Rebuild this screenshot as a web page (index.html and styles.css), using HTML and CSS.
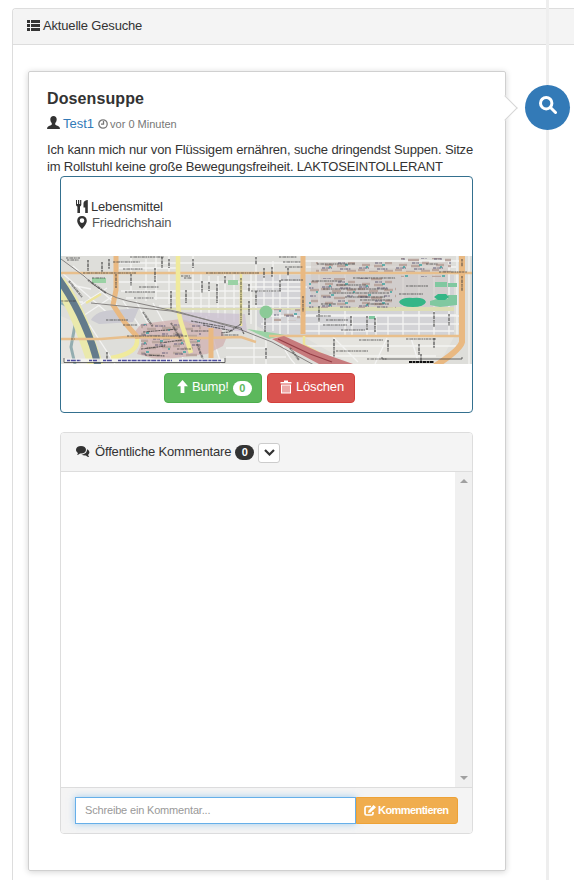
FILE: index.html
```html
<!DOCTYPE html>
<html lang="de">
<head>
<meta charset="utf-8">
<title>Aktuelle Gesuche</title>
<link rel="stylesheet" href="styles.css">
</head>
<body>
<main class="panel">
  <header class="panel-head">
    <svg class="ic-list" viewBox="0 0 13 11"><path d="M0 0h3v3H0zM4 0h9v3H4zM0 4h3v3H0zM4 4h9v3H4zM0 8h3v3H0zM4 8h9v3H4z"/></svg>
    <span class="t-head">Aktuelle Gesuche</span>
  </header>
  <div class="timeline">
    <article class="card">
      <h1><span>Dosensuppe</span></h1>
      <div class="meta">
        <svg class="ic-user" viewBox="0 0 13 13"><path d="M6.500 0c2 0 3.200 1.300 3.200 3.300 0 1.500-.6 3-1.500 3.900v1.200c.6.900 4 1.500 4.500 3 .2.500.2 1 .2 1.600H.1c0-.6 0-1.100.2-1.600.5-1.500 3.900-2.100 4.500-3V7.200c-.9-.9-1.500-2.400-1.500-3.900C3.300 1.300 4.500 0 6.500 0z"/></svg>
        <a class="user">Test1</a>
        <svg class="ic-time" viewBox="0 0 10 10"><circle cx="5" cy="5" r="4.200"/><path d="M5.500 2v3.200H3"/></svg>
        <small>vor 0 Minuten</small>
      </div>
      <p class="body"><span class="l1">Ich kann mich nur von Flüssigem ernähren, suche dringendst Suppen. Sitze</span><span class="l2">im Rollstuhl keine große Bewegungsfreiheit. LAKTOSEINTOLLERANT</span></p>
      <section class="info">
        <div class="tags">
          <div class="row"><svg class="ic-food" viewBox="0 0 13 13"><path d="M0 0h1v4h1V0h1.200v4h.9V0h1.200v4.500c0 1-.6 1.600-1.300 2V13H1.400V6.500C.6 6.100 0 5.500 0 4.500zM11.800 0v13H9.200V7.500H7.500V3.200C7.500 1.300 9.500 0 11.800 0z"/></svg><span class="t-food">Lebensmittel</span></div>
          <div class="row"><svg class="ic-pin" viewBox="0 0 10 13"><path fill-rule="evenodd" d="M5 0c2.800 0 4.800 2 4.800 4.700C9.800 7.600 7 11 5 13 3 11 .2 7.600.2 4.700.2 2 2.200 0 5 0zm0 2.300a2.300 2.300 0 1 0 0 4.600 2.300 2.300 0 0 0 0-4.600z"/></svg><span class="t-place">Friedrichshain</span></div>
        </div>
        <svg class="map" viewBox="0 0 411 108" preserveAspectRatio="none">
          <defs>
            <pattern id="blocks" width="37" height="19" patternUnits="userSpaceOnUse"><path d="M1 2h9M14 4h11M5 9h8M17 10h9M1 14h7M12 16h9M28 7h7M27 15h9" stroke="#b9a69f" stroke-width="2.500"/><path d="M3 3h8M18 7h7M2 12h10M20 13h11M27 2h6" stroke="#615c77" stroke-width="1" stroke-dasharray="3 .7 1 .6"/><path d="M11 1h3M25 9h3M9 11h2M33 17h2" stroke="#3aa2a0" stroke-width="1.300"/></pattern>
          </defs>
          <path fill="#dededa" d="M0 0h411v108H0z"/>
          <path fill="#d3d3d6" d="M196 19h197v60H212L196 70z"/>
          <path fill="#e5e4df" d="M243 81h150l-15 27H290zM0 60l18 8 12 40H0z"/>
          <g class="roads">
            <path d="M70 0v37M85 3v42M95 0v44M108 0v48M132 0v58M140 18v42M148 20v40M157 20v42M164 18v46M173 18v48M190 18v50M195 0v75M203 18v55M212 5v70M219 18v60M227 18v60M258 6v74M284 6v74M291 60v20M306 60v20M315 60v20M327 60v20M342 6v74M358 6v74M373 6v74M388 6v74M205 84v24M193 78v30M396 0v80M408 0v108"/>
            <path d="M58 7h184M58 12h60M58 26h186M60 35h184M65 42h178M98 50h145M200 60h200M200 68h200M243 75h150M243 5h160M245 11h150M186 31h60M245 59h150M245 90h150M255 100h120M165 92h40M165 101h60"/>
            <path d="M0 16l50 44M12 10l45 40M18 50l28-18M22 60l30-20M62 45l30 45M75 45l32 61M92 47l30 55M28 68l26 40M145 60l15 48M272 81l25 25M326 82l-12 26M350 82l8 26M222 90q6 12 12 18M0 46h22M0 27l30 6"/>
          </g>
          <path fill="#cbcad1" d="M30 64q5-10 24-10l24-2-6 14-34 2z"/>
          <path fill="#d0b0b0" opacity=".75" d="M80 68l40-5 40 10 5 10-3 7-16 8-48 6-22-6 6-13-10-7z"/>
          <path fill="#cbbfd0" opacity=".7" d="M118 56l66 2 2 18-38-4-30-8z"/>
          <path fill="#cfcac6" opacity=".65" d="M250 6h137v44l-137 5z"/>
          <path fill="#ddddb5" d="M244 51h149v4H244zM100 52h142v2H100z"/>
          <path fill="url(#blocks)" d="M248 22h87v30h-87zM255 6h87v12h-87zM340 2h50v19h-50zM80 68h60v33H80zM213 53h26v12h-26z"/>
          <path class="names" stroke="#464369" d="M256 8h38M251 25h30M292 22h42M262 33h65M268 37h60M284 41h40M299 44h32M275 29h30M306 48h22M260 48h15M345 30h22M338 38h24M365 8h12"/>
          <path fill="#9bd2a5" d="M167 24h10v5h-10zM31 22h14v5H31zM186 73l27 4 11 2-16 4z"/>
          <circle cx="205" cy="56" r="6.500" fill="#8bca97"/>
          <path fill="#80c8a0" d="M374 26h12v5h-12zM387 27h9v4h-9zM387 39h9v5h-9zM369 45l10-3 17 2v5l-17 2-10-2zM308 60h6v3h-6z"/>
          <path fill="#35b687" d="M338 46q3-5 14-4 11-1 13 4-2 5-13 5-12 0-14-5zM373 41l4-3h8l3 3-4 3h-7z"/>
          <path fill="none" stroke="#93adb0" stroke-width="3" d="M0 47q14 5 14 22l-4 22q2 9 4 17"/>
          <path fill="none" stroke="#eae9ac" stroke-width="15" d="M-3 26q14 18 23 42t15 42"/>
          <path fill="none" stroke="#637b8b" stroke-width="7" d="M-3 22q15 21 26 46t14 43"/>
          <path fill="none" stroke="#e8bf8c" stroke-width="2.400" d="M0 17h411M0 83h40l25-2 80 1 35-1 15 5M208 80h190"/>
          <path fill="none" stroke="#e9b982" stroke-width="5" d="M55 0v34l-3 15 12 18 14 16M150 72v30M242 0v78"/>
          <path fill="none" stroke="#e9b982" stroke-width="6" d="M401 0v86q-2 8-27 24"/>
          <path fill="none" stroke="#f0ea9c" stroke-width="4.500" d="M117 0v45q0 15 6 30l7 22M76 83q2 14-26 19"/>
          <path fill="none" stroke="#ede49a" stroke-width="2.500" d="M243 80v9q18 9 33 18M25 47l15-9M180 18v52"/>
          <path fill="none" stroke="#858280" stroke-width="1" d="M0 3l23 17q20 20 44 25l51 11 60 17 33 13 42 23M30 47l80 8 70 17"/>
          <path fill="#c77b7d" d="M211 83l12-3 35 16 34 12h-34z"/>
          <path fill="none" stroke="#943e46" stroke-width="1.300" d="M217 83l32 15 22 8"/>
          <path class="names" stroke="#4f452d" d="M180 22v46l-12 8-8 1M180 72l3 6M55 18v14M401 20v15M401 3v8M242 40v16"/>
          <path class="names up-names" d="M27 4v11M41 6v10M48 3v10M70 18v12M94 12v14M101 1v11M108 3v9M110 35v18M132 3v9M125 34v13M141 25v12M148 26v9M156 28v19M164 20v8M188 28v8M195 1v8M195 35v14M188 45v14M203 12v10M211 11v10M219 24v11M227 12v8M204 62v14M258 50v16M290 60v10M306 60v14M314 62v14M273 83v18M327 84v12M373 56v15M388 58v12M358 88v11M373 82v10M360 98v8M205 92v11M46 96v8M229 92l9 12M82 56l10 15M8 25l13 16M27 24l18 13M110 67l9 15M136 88l6 15"/>
          <path class="names" d="M22 17h53M145 17h53M378 16h28M69 1h34M52 6h27M62 13h20M78 31h20M64 36h30M73 42h20M218 1h18M222 6h18M224 11h18M220 24h22M190 35h30M5 2h14M6 4h12M45 64h22M62 69h14M265 64h22M262 69h24M280 74h24M255 60h15M298 84h24M345 83h30M275 95h32M306 103h20M10 83h4M66 80h60M0 45h15M120 20h9M123 22h8M31 22h13M160 79h18"/>
          <path class="names" stroke="#5a4b8f" d="M130 65l34 6M142 69l30 6M82 76l35-3M99 87l22-3M80 93l24-3M84 99l20 1M116 93h14M130 75h18"/>
          <path fill="#f4f4f2" opacity=".85" d="M3 102.500h161v3.500H3z"/>
          <path fill="none" stroke="#4a4a9d" stroke-width="1.600" stroke-dasharray="3 .8 5 1" d="M6 104.500h14M28 104.500h8M42 104.500h9M57 104.500h54M118 104.500h42"/>
          <path fill="none" stroke="#444" d="M3 102v4.500h161V102M321 101v2h80v-2" stroke-width=".8"/>
          <path fill="none" stroke="#111" stroke-width="2" stroke-dasharray="3 .5" d="M348 106h25"/>
        </svg>
        <div class="actions">
          <button class="btn green"><svg class="ic-up" viewBox="0 0 11 13"><path d="M5.500 0L11 6.200H7.400V13H3.600V6.200H0z"/></svg><span class="t-bump">Bump!</span><b class="badge-w">0</b></button>
          <button class="btn red"><svg class="ic-trash" viewBox="0 0 12 13"><path fill-rule="evenodd" d="M4 1.500V0h4v1.500h3.500V3H.5V1.500zM1 4h10v9H1zm1.500 1v7h1V5zm2 0v7h1V5zm2 0v7h1V5zm2 0v7h1V5z"/></svg><span class="t-del">Löschen</span></button>
        </div>
      </section>
      <section class="comments">
        <header class="c-head">
          <svg class="ic-chat" viewBox="0 0 14 12"><path d="M5 0c3 0 5 1.600 5 3.800S8 7.600 5 7.600l-1 0Q2.800 9 1 9q.8-.8.9-2C.7 6.300 0 5.100 0 3.800 0 1.600 2 0 5 0z"/><path d="M11 3.200c1.400.6 2.400 1.800 2.400 3.100 0 1-.5 1.800-1.300 2.400.1 1 .5 1.700 1.100 2.200-1.600 0-2.600-.6-3.200-1.500-1.800.2-3.500-.2-4.600-.9C9 8.300 11.200 6.300 11 3.200z"/></svg>
          <span class="t-com">Öffentliche Kommentare</span>
          <b class="badge-d">0</b>
          <button class="toggle"><svg viewBox="0 0 11 7"><path d="M1 1l4.500 4.500L10 1"/></svg></button>
        </header>
        <div class="c-body"><div class="scroll"><i class="up"></i><i class="down"></i></div></div>
        <footer class="c-foot">
          <div class="input"><span class="t-ph">Schreibe ein Kommentar...</span></div>
          <button class="send"><svg class="ic-edit" viewBox="0 0 12 11"><path d="M7 1.500H2.500Q1 1.500 1 3v5.500Q1 10 2.500 10h5Q9 10 9 8.500V7" fill="none" stroke="#fff" stroke-width="1.700"/><path d="M9.500 0L12 2.300 6.500 7.500 4 8l.6-2.600z" fill="#fff"/></svg><span class="t-send">Kommentieren</span></button>
        </footer>
      </section>
    </article>
    <div class="dot"><svg viewBox="0 0 18 18"><circle cx="7.200" cy="7.200" r="5.700"/><path d="M11.500 11.500l5 5"/></svg></div>
  </div>
</main>
<div class="line"></div>
</body>
</html>
```
FILE: styles.css
```css
* { box-sizing: border-box; }
html, body { margin: 0; height: 880px; overflow: hidden; }
body { position: relative; background: #fff; color: #333; font: 13px/17px "Liberation Sans", Arial, sans-serif; letter-spacing: -.17px; }
svg { display: block; flex: none; fill: #333; }
span, small, a { white-space: nowrap; }
button { font: inherit; letter-spacing: inherit; margin: 0; padding: 0; }
.panel { margin: 8px 0 0 12px; height: 872px; border: 1px solid #ddd; border-width: 1px 0 0 1px; border-radius: 4px 0 0 0; }
.panel-head { height: 36px; padding: 0 0 2px 14px; display: flex; align-items: center; gap: 3px; background: #f4f4f4; border-bottom: 1px solid #ddd; border-radius: 3px 0 0 0; }
.ic-list { width: 13px; height: 11px; }
.timeline { display: flex; align-items: flex-start; padding: 26px 0 0 15px; }
.card { position: relative; flex: none; width: 478px; height: 800px; border: 1px solid #d0d0d0; border-radius: 2px; padding: 17px 32px 0 18px; box-shadow: 0 1px 6px rgba(0,0,0,.175); }
.card::after { content: ""; position: absolute; right: -9px; top: 27px; width: 17px; height: 17px; border: 1px solid #d6d6d6; border-width: 1px 1px 0 0; background: #fff; transform: rotate(45deg); }
h1 { margin: 0; font-size: 16px; line-height: 20px; font-weight: bold; letter-spacing: .1px; }
.meta { display: flex; align-items: center; height: 17px; margin-top: 6px; }
.ic-user { width: 13px; height: 13px; margin: -2px 3px 0 0; }
.user { color: #337ab7; margin-right: 4px; letter-spacing: 0; }
.ic-time { width: 10px; height: 10px; margin: 1px 2px 0 0; fill: none; stroke: #777; stroke-width: 1.300; }
small { font-size: 11px; color: #777; margin-top: 1px; letter-spacing: 0; }
.body { margin: 9px 0 0; width: 427px; }
.body span { display: block; }
.body .l1 { white-space: normal; text-align-last: justify; margin-right: 1px; }
.info { width: 413px; height: 237px; margin: 1px 0 0 13px; border: 1px solid #34708f; border-radius: 4px; }
.tags { height: 79px; padding: 21px 0 0 15px; }
.row { display: flex; align-items: center; height: 16px; gap: 2px; }
.ic-food { width: 13px; height: 13px; }
.ic-pin { width: 10px; height: 13px; margin: 0 3px 0 1px; }
.t-place { color: #555; }
.map { width: 411px; height: 108px; }
.roads { fill: none; stroke: #f3f3f2; stroke-width: 1.3; }
.names { fill: none; stroke: #3d3d3d; stroke-width: 1.2; stroke-dasharray: 2 .6 1 .5 3 .6; opacity: .75; }
.up-names { stroke-width: 2; opacity: .55; }
.actions { display: flex; justify-content: center; gap: 5px; padding: 9px 14px 0 0; }
.btn { display: flex; align-items: center; height: 30px; color: #fff; border: 1px solid; border-radius: 4px; }
.btn svg { fill: #fff; margin-top: -3px; }
.btn span { margin-top: -3px; }
.green { width: 98px; padding-left: 12px; background: #5cb85c; border-color: #4cae4c; }
.red { width: 88px; padding-left: 12px; background: #d9534f; border-color: #d43f3a; }
.ic-up { width: 11px; height: 13px; margin-right: 4px; }
.ic-trash { width: 12px; height: 14px; margin-right: 4px; }
.badge-w, .badge-d { display: block; border-radius: 8px; width: 19px; height: 15px; font-size: 11px; line-height: 15px; text-align: center; }
.badge-w { margin-left: 4px; background: #fff; color: #5cb85c; }
.badge-d { margin: 1px 4px 0 4px; background: #333; color: #fff; }
.comments { width: 413px; height: 402px; margin: 19px 0 0 13px; border: 1px solid #ddd; border-radius: 4px; }
.c-head { display: flex; align-items: center; height: 39px; padding-left: 15px; background: #f4f4f4; border-bottom: 1px solid #ddd; border-radius: 3px 3px 0 0; }
.ic-chat { width: 14px; height: 12px; margin: -1px 5px 0 0; }
.t-com { margin-top: -2px; }
.toggle { width: 22px; height: 20px; margin-top: 1px; background: #fff; border: 1px solid #ccc; border-radius: 3px; display: flex; align-items: center; justify-content: center; }
.toggle svg { width: 11px; height: 7px; fill: none; stroke: #333; stroke-width: 2.200; }
.c-body { height: 315px; display: flex; justify-content: flex-end; }
.scroll { width: 17px; background: #f0f0f0; display: flex; flex-direction: column; justify-content: space-between; align-items: center; padding: 7px 0; }
.scroll i { border: 4px solid transparent; }
.scroll .up { border-top: 0; border-bottom-color: #a0a0a0; }
.scroll .down { border-bottom: 0; border-top-color: #a0a0a0; }
.c-foot { height: 46px; padding: 9px 0 0 14px; background: #f4f4f4; border-top: 1px solid #ddd; border-radius: 0 0 3px 3px; display: flex; }
.input { width: 281px; height: 27px; padding-left: 9px; background: #fff; border: 1px solid #66afe9; box-shadow: 0 0 7px rgba(102,175,233,.6); font-size: 11px; line-height: 25px; color: #999; }
.send { display: flex; align-items: center; width: 102px; height: 27px; padding-left: 7px; background: #f0ad4e; border: 1px solid #eea236; border-radius: 0 3px 3px 0; color: #fff; font-size: 11px; font-weight: bold; }
.ic-edit { width: 12px; height: 11px; margin-right: 2px; }
.t-send { letter-spacing: -.55px; }
.dot { position: relative; z-index: 2; flex: none; width: 45px; height: 45px; margin: 14px 0 0 19px; border-radius: 50%; background: #337ab7; }
.dot svg { width: 18px; height: 18px; margin: 11px 0 0 14px; fill: none; stroke: #fff; stroke-width: 3; stroke-linecap: round; }
.line { position: absolute; z-index: 1; top: 0; left: 546px; width: 3px; height: 880px; background: #eee; }
```
